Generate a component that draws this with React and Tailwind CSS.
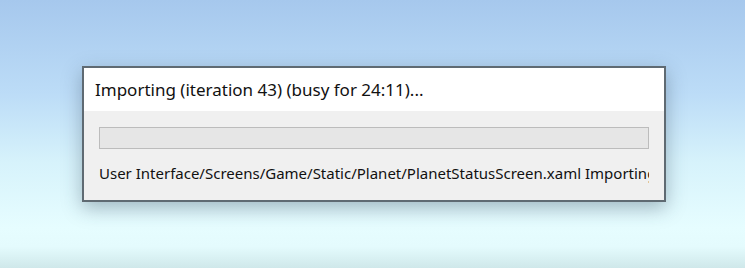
export default function App() {
  return (
    <div
      className="h-[268px] w-[745px] overflow-hidden bg-[linear-gradient(to_bottom,#a6c8ed_0%,#bcdcf7_35%,#d6f2fb_60%,#e6fdff_85%,#e4fbfd_92%,#cfe8ea_100%)] pt-[66px] pl-[82px]"
      style={{ fontFamily: '"Noto Sans", "Open Sans", sans-serif' }}
    >
      <div className="w-[584px] h-[136px] border-2 border-[#5f6a72] bg-[#f0f0f0] shadow-[0_6px_18px_rgba(40,60,80,0.35)] flex flex-col">
        <div className="h-[43px] bg-white flex items-center pl-[11px] text-[17px] text-[#111]">
          Importing (iteration 43) (busy for 24:11)...
        </div>
        <div className="flex flex-col px-[15px] pt-[16px]">
          <div className="h-[22px] border border-[#bcbcbc] bg-[#e6e6e6]" />
          <div className="mt-[14px] overflow-hidden whitespace-nowrap text-[15px] leading-[20px] text-[#111]">
            User Interface/Screens/Game/Static/Planet/PlanetStatusScreen.xaml Importing
          </div>
        </div>
      </div>
    </div>
  );
}
